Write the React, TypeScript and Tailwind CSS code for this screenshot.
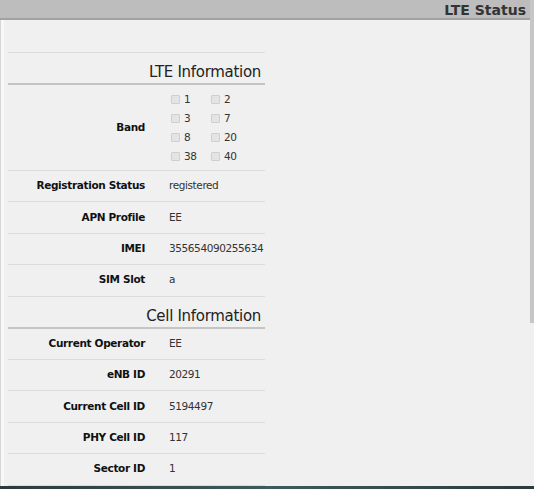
import React from 'react';

const bands = [
    ['1', '2'],
    ['3', '7'],
    ['8', '20'],
    ['38', '40'],
];

const lteRows = [
    { label: 'Registration Status', value: 'registered' },
    { label: 'APN Profile', value: 'EE' },
    { label: 'IMEI', value: '355654090255634' },
    { label: 'SIM Slot', value: 'a' },
];

const cellRows = [
    { label: 'Current Operator', value: 'EE' },
    { label: 'eNB ID', value: '20291' },
    { label: 'Current Cell ID', value: '5194497' },
    { label: 'PHY Cell ID', value: '117' },
    { label: 'Sector ID', value: '1' },
];

function SectionTitle({ title }: { title: string }) {
    return (
        <div className="h-[32px] flex items-end justify-end pr-[4px] pb-[1px] border-b-2 border-[#c4c4c4]">
            <span className="text-[15px] tracking-[-0.3px] leading-none text-[#222] pb-[2px]">{title}</span>
        </div>
    );
}

function Row({ label, value }: { label: string; value: string }) {
    return (
        <div className="grid grid-cols-[137px_1fr] gap-x-[24px] h-[31.4px] items-center border-b border-[#dcdcdc]">
            <span className="text-right font-bold text-[10.5px] tracking-[-0.35px] text-[#111]">{label}</span>
            <span className="text-[10.5px] tracking-[-0.4px] text-[#333]">{value}</span>
        </div>
    );
}

function BandBox({ name }: { name: string }) {
    return (
        <label className="flex items-center gap-[4px] w-[40px]">
            <span className="w-[9px] h-[9px] rounded-[1px] border border-[#cfcfcf] bg-[#e4e4e4]" />
            <span className="text-[10.5px] tracking-[-0.4px] text-[#333]">{name}</span>
        </label>
    );
}

export default function App() {
    return (
        <div
            className="w-[534px] h-[489px] bg-[#f0f0f0] flex flex-col overflow-hidden"
            style={{ fontFamily: '"DejaVu Sans", Verdana, sans-serif' }}
        >
            <div className="flex flex-1 min-h-0">
                <div className="flex flex-col flex-1">
                    {/* title bar */}
                    <div className="h-[20px] bg-[#bdbdbd] border-b-2 border-[#a2a2a2] flex items-center justify-end pr-[4px]">
                        <span className="text-[14px] font-bold text-[#333] leading-none pt-[1px]">LTE Status</span>
                    </div>

                    <div className="flex flex-1">
                        <div className="w-[1px] bg-[#d6d6d6]" />
                        <div className="w-[3px] bg-[#f8f8f8]" />
                        <div className="w-[257px] ml-[4px] flex flex-col">
                            <div className="h-[33px] border-b border-[#dcdcdc]" />

                            <SectionTitle title="LTE Information" />
                            <div className="grid grid-cols-[137px_1fr] gap-x-[24px] items-center border-b border-[#dcdcdc] pt-[5px] pb-[4px]">
                                <span className="text-right font-bold text-[10.5px] tracking-[-0.35px] text-[#111]">Band</span>
                                <div className="flex flex-col pl-[2px]">
                                    {bands.map((pair) => (
                                        <div key={pair[0]} className="h-[19px] flex items-center">
                                            <BandBox name={pair[0]} />
                                            <BandBox name={pair[1]} />
                                        </div>
                                    ))}
                                </div>
                            </div>
                            {lteRows.map((r) => (
                                <Row key={r.label} label={r.label} value={r.value} />
                            ))}

                            <SectionTitle title="Cell Information" />
                            {cellRows.map((r) => (
                                <Row key={r.label} label={r.label} value={r.value} />
                            ))}
                        </div>
                    </div>
                </div>

                {/* scrollbar strip */}
                <div className="w-[4px] flex flex-col">
                    <div className="h-[323px] bg-[#c6c6c6]" />
                </div>
            </div>
            <div className="h-[3px] bg-gradient-to-r from-[#2c3a3d] via-[#3f5a5c] to-[#2c3a3d]" />
        </div>
    );
}
